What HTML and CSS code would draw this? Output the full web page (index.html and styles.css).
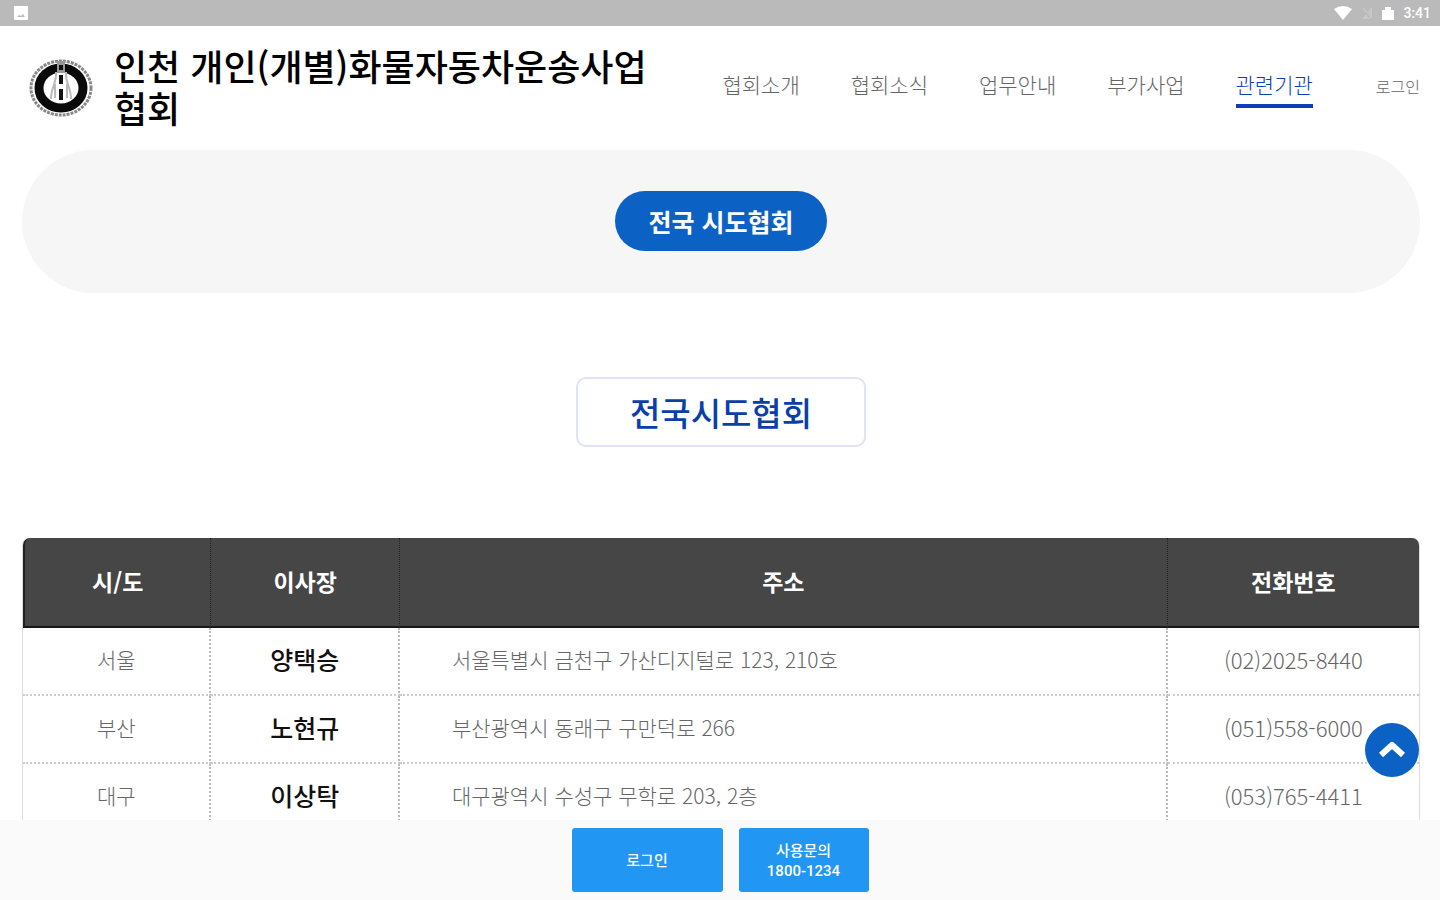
FILE: index.html
```html
<!DOCTYPE html>
<html lang="ko">
<head>
    <meta charset="UTF-8">
    <meta name="viewport" content="width=device-width, initial-scale=1.0">
    <title>전국시도협회</title>
    <link rel="stylesheet" href="styles.css">
</head>
<body>
    <div class="status-bar">
        <svg class="status-picture" width="14" height="14" viewBox="0 0 14 14">
            <rect width="14" height="14" rx="1" fill="#fff"/>
            <path d="M3 11l2-2 2 1 2-2 2 3z" fill="#bababa"/>
        </svg>
        <div class="status-right">
            <svg width="18" height="14" viewBox="0 0 18 14">
                <path d="M0 3Q9-3 18 3L9 14z" fill="#fff"/>
            </svg>
            <svg width="12" height="14" viewBox="0 0 12 14">
                <path d="M11 1v12H1z" fill="#c8c8c8"/>
                <path d="M1 2l10 11" stroke="#bababa" stroke-width="3"/>
                <path d="M2 2l9 10" stroke="#d2d2d2" stroke-width="1"/>
            </svg>
            <svg width="12" height="14" viewBox="0 0 12 14">
                <path d="M3 4V1h6v3h3v10H0V4z" fill="#fff"/>
            </svg>
            <span class="time">3:41</span>
        </div>
    </div>

    <main class="page">
        <header class="header">
            <svg class="logo" viewBox="0 0 64 60">
                <ellipse cx="32" cy="30" rx="30" ry="27" fill="none" stroke="#888" stroke-width="3" stroke-dasharray="3 1"/>
                <ellipse cx="32" cy="30" rx="22" ry="20" fill="#fff" stroke="#0a0a0a" stroke-width="9"/>
                <path d="M28 3h8v12h-8z" fill="#999"/>
                <path d="M27 14C28 24 22 29 22 41M37 14C36 24 42 29 42 41M26 26v14M38 26v14" fill="none" stroke="#bbb" stroke-width="2"/>
                <path d="M32 7v5M32 17v9M32 31v11" stroke="#111" stroke-width="4"/>
            </svg>
            <h1>인천 개인(개별)화물자동차운송사업협회</h1>
            <nav class="menu">
                <a href="#">협회소개</a>
                <a href="#">협회소식</a>
                <a href="#">업무안내</a>
                <a href="#">부가사업</a>
                <a href="#" class="active">관련기관</a>
            </nav>
            <a href="#" class="login">로그인</a>
        </header>

        <div class="tabs">
            <a href="#" class="tab">전국 시도협회</a>
        </div>

        <h2 class="title">전국시도협회</h2>

        <table class="list">
            <thead>
                <tr>
                    <th class="col-city">시/도</th>
                    <th class="col-name">이사장</th>
                    <th>주소</th>
                    <th class="col-tel">전화번호</th>
                </tr>
            </thead>
            <tbody>
                <tr>
                    <td>서울</td>
                    <td class="name">양택승</td>
                    <td class="address">서울특별시 금천구 가산디지털로 123, 210호</td>
                    <td class="tel">(02)2025-8440</td>
                </tr>
                <tr>
                    <td>부산</td>
                    <td class="name">노현규</td>
                    <td class="address">부산광역시 동래구 구만덕로 266</td>
                    <td class="tel">(051)558-6000</td>
                </tr>
                <tr>
                    <td>대구</td>
                    <td class="name">이상탁</td>
                    <td class="address">대구광역시 수성구 무학로 203, 2층</td>
                    <td class="tel">(053)765-4411</td>
                </tr>
            </tbody>
        </table>
    </main>

    <footer class="bottom-bar">
        <button class="btn btn-login">로그인</button>
        <button class="btn btn-call">사용문의<br>1800-1234</button>
    </footer>

    <button class="go-top" aria-label="맨 위로">
        <svg width="30" height="22" viewBox="0 0 30 22">
            <path d="M4 16L15 6l11 10" fill="none" stroke="#fff" stroke-width="6" stroke-linejoin="round"/>
        </svg>
    </button>
</body>
</html>
```

FILE: styles.css
```css
* {
    box-sizing: border-box;
}
body {
    margin: 0;
    height: 100vh;
    display: flex;
    flex-direction: column;
    font-family: "Noto Sans CJK KR", sans-serif;
    background-color: #fff;
    color: #666;
}
a {
    color: inherit;
    text-decoration: none;
}
.status-bar {
    flex: none;
    height: 26px;
    padding: 0 9px 0 14px;
    display: flex;
    align-items: center;
    justify-content: space-between;
    background-color: #bababa;
}
.status-right {
    display: flex;
    align-items: center;
    gap: 9px;
}
.time {
    font-family: Roboto, sans-serif;
    font-size: 14px;
    font-weight: 500;
    color: #fff;
}
.page {
    flex: 1;
    min-height: 0;
    overflow: hidden;
    padding: 0 20px 0 22px;
}
.header {
    min-height: 124px;
    padding-bottom: 4px;
    display: flex;
    align-items: center;
}
.logo {
    flex: none;
    width: 64px;
    height: 60px;
    margin: 4px 21px 0 7px;
}
h1 {
    flex: 1;
    margin: 0;
    font-size: 36px;
    font-weight: 500;
    line-height: 42px;
    color: #000;
}
.menu {
    display: flex;
    gap: 51px;
    margin: 0 63px 0 48px;
    white-space: nowrap;
}
.menu a {
    padding: 2px 0;
    border-bottom: 4px solid transparent;
    font-size: 21px;
    font-weight: 300;
    line-height: 36px;
}
.menu .active {
    color: #0a3fb5;
    border-bottom-color: #0a3fb5;
}
.login {
    font-size: 16px;
    font-weight: 300;
    white-space: nowrap;
}
.tabs {
    display: flex;
    justify-content: center;
    padding: 41px 0 42px;
    border-radius: 72px;
    background-color: #f6f6f6;
}
.tab {
    padding: 0 33px;
    border-radius: 30px;
    background-color: #0b61c4;
    color: #fff;
    font-size: 25px;
    font-weight: 700;
    line-height: 60px;
}
.title {
    width: fit-content;
    margin: 84px auto 91px;
    padding: 0 52px;
    border: 2px solid #dfe3f3;
    border-radius: 10px;
    color: #0a3fa8;
    font-size: 33px;
    font-weight: 500;
    line-height: 66px;
}
.list {
    width: 100%;
    table-layout: fixed;
    border-spacing: 0;
    border: 1px solid #ddd;
    border-top: none;
    border-radius: 7px 7px 0 0;
    font-size: 21px;
    font-weight: 300;
}
.list th {
    height: 90px;
    padding: 0 0 2px;
    background-color: #464646;
    border-right: 1px dotted #222;
    border-bottom: 2px solid #181818;
    color: #fff;
    font-size: 23px;
    font-weight: 700;
}
.list th:first-child {
    border-left: 2px solid #222;
    border-radius: 7px 0 0 0;
}
.list th:last-child {
    border-radius: 0 7px 0 0;
}
.list td {
    height: 68px;
    padding: 0 0 4px;
    border-right: 2px dotted #bbb;
    border-bottom: 2px dotted #ccc;
    text-align: center;
}
.list th:last-child,
.list td:last-child {
    border-right: none;
}
.col-city,
.col-name {
    width: 13.5%;
}
.col-tel {
    width: 18%;
}
.list .name {
    color: #111;
    font-size: 25px;
    font-weight: 500;
}
.list .address {
    padding-left: 52px;
    text-align: left;
}
.list .tel {
    font-size: 22px;
}
.bottom-bar {
    flex: none;
    display: flex;
    justify-content: center;
    gap: 16px;
    padding: 8px 0;
    background-color: #fafafa;
}
.btn {
    height: 64px;
    padding: 2px 0 0;
    border: none;
    border-radius: 3px;
    background-color: #2196f3;
    color: #fff;
    font-family: Roboto, "Noto Sans CJK KR", sans-serif;
    font-size: 15px;
    font-weight: 500;
    line-height: 20px;
    cursor: pointer;
}
.btn-login {
    width: 151px;
}
.btn-call {
    width: 130px;
}
.go-top {
    position: absolute;
    right: 21px;
    bottom: 123px;
    width: 54px;
    height: 54px;
    padding: 0;
    display: flex;
    align-items: center;
    justify-content: center;
    border: none;
    border-radius: 50%;
    background-color: #0b61c4;
    cursor: pointer;
}
```
